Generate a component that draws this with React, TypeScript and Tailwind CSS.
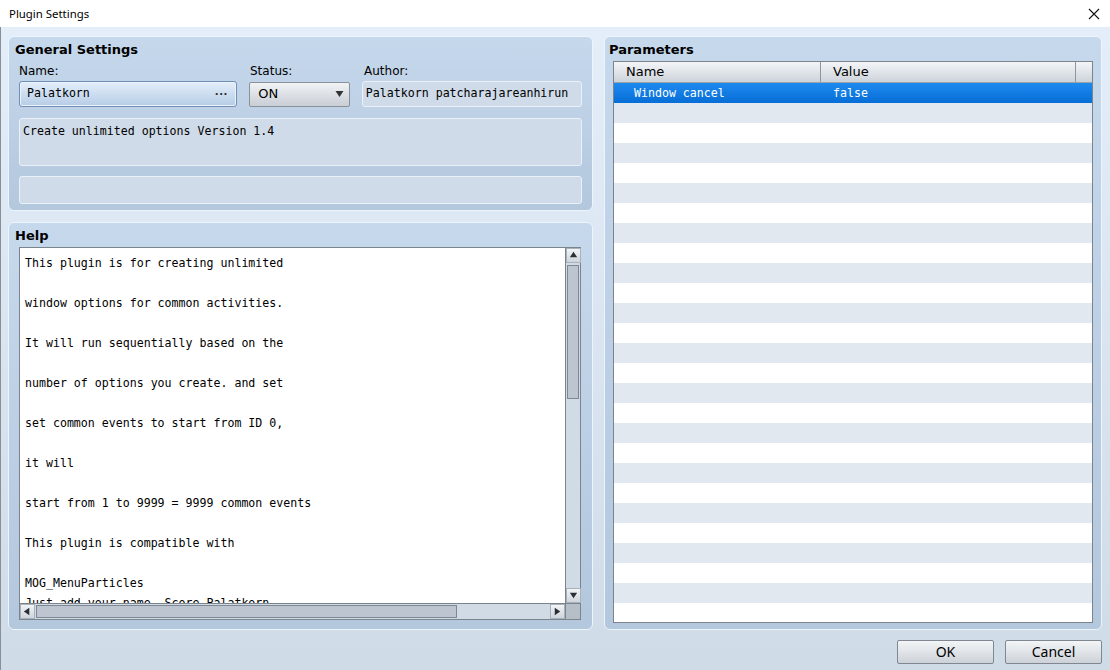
import React from "react";

const helpLines = [
  "This plugin is for creating unlimited",
  "",
  "window options for common activities.",
  "",
  "It will run sequentially based on the",
  "",
  "number of options you create. and set",
  "",
  "set common events to start from ID 0,",
  "",
  "it will",
  "",
  "start from 1 to 9999 = 9999 common events",
  "",
  "This plugin is compatible with",
  "",
  "MOG_MenuParticles",
  "Just add your name. Score Palatkorn",
];

const sans = "font-['DejaVu_Sans',sans-serif]";
const mono = "font-['DejaVu_Sans_Mono',monospace]";
const ui = "font-['Noto_Sans',sans-serif]";

function GroupBox({
  title,
  className,
  titleClass,
  children,
}: {
  title: string;
  className?: string;
  titleClass?: string;
  children: React.ReactNode;
}) {
  return (
    <div
      className={`flex flex-col rounded-[6px] border border-[#eef4fb] bg-gradient-to-b from-[#c6d8ec] to-[#b3c7dd] ${className ?? ""}`}
    >
      <div className={`${sans} h-[24px] pt-[5px] text-[13px] font-bold leading-[16px] text-black ${titleClass ?? "pl-[6px]"}`}>
        {title}
      </div>
      {children}
    </div>
  );
}

function Arrow({ dir }: { dir: "up" | "down" | "left" | "right" }) {
  const pts = {
    up: "2,8 6,2 10,8",
    down: "2,3 10,3 6,9",
    left: "8,2 8,10 2,6",
    right: "3,2 3,10 9,6",
  }[dir];
  return (
    <div className="flex h-[15px] w-[15px] items-center justify-center border border-[#a9b2bc] bg-gradient-to-b from-[#f2f4f6] to-[#cfd5dc]">
      <svg width="11" height="11" viewBox="0 0 12 12">
        <polygon points={pts} fill="#2a2f36" />
      </svg>
    </div>
  );
}

export default function App() {
  const rows = Array.from({ length: 27 });
  return (
    <div className="flex h-[670px] w-[1110px] flex-col overflow-hidden bg-white">
      {/* title bar */}
      <div className="flex h-[27px] shrink-0 items-center justify-between bg-white pl-[9px] pr-[8px]">
        <span className={`${ui} text-[11.4px] text-black`}>Plugin Settings</span>
        <svg width="12" height="12" viewBox="0 0 12 12" className="mr-[2px]">
          <path d="M1 1 L11 11 M11 1 L1 11" stroke="#111" strokeWidth="1.1" />
        </svg>
      </div>

      {/* body */}
      <div className="flex flex-1 flex-col border-l border-[#8a8f96] bg-gradient-to-b from-[#e3eefa] to-[#cfdbe7] pl-[7px] pr-[7px] pt-[9px]">
        <div className="flex h-[594px] gap-[11px]">
          {/* left column */}
          <div className="flex w-[585px] flex-col gap-[11px]">
            <GroupBox title="General Settings" className="h-[175px]">
              <div className="flex flex-col px-[10px]">
                <div className={`${sans} flex h-[20px] items-start pt-[3px] text-[12px] leading-[15px] text-black`}>
                  <span className="w-[231px]">Name:</span>
                  <span className="w-[114px]">Status:</span>
                  <span>Author:</span>
                </div>
                <div className="flex h-[26px] items-center">
                  <div className="flex h-[26px] w-[219px] items-center justify-between rounded-[3px] border border-[#6f8fb5] bg-gradient-to-b from-[#e3eefa] to-[#b6cde6] pl-[7px] pr-[8px] shadow-[inset_0_0_0_1px_#eaf2fb]">
                    <span className={`${mono} text-[11.6px] text-black`}>Palatkorn</span>
                    <span className="text-[12px] font-bold leading-none tracking-[1px] text-[#222]">···</span>
                  </div>
                  <div className="ml-[12px] flex h-[25px] w-[101px] items-center justify-between rounded-[2px] border border-[#8a9199] bg-gradient-to-b from-[#f1f3f5] to-[#c9ced5] pl-[8px] pr-[5px]">
                    <span className={`${sans} text-[13px] text-black`}>ON</span>
                    <svg width="9" height="8" viewBox="0 0 9 8">
                      <polygon points="0.5,1 8.5,1 4.5,7" fill="#333" />
                    </svg>
                  </div>
                  <div className="ml-[12px] flex h-[26px] w-[221px] items-center rounded-[3px] border border-[#eaf1f8] bg-[#cfdbe8] pl-[3px]">
                    <span className={`${mono} whitespace-nowrap text-[11.6px] text-black`}>
                      Palatkorn patcharajareanhirun
                    </span>
                  </div>
                </div>
                <div className={`${mono} mt-[11px] h-[48px] rounded-[3px] border border-[#eaf1f8] bg-[#cfdbe8] px-[3px] pt-[5px] text-[11.6px] leading-[14px] text-black`}>
                  Create unlimited options Version 1.4
                </div>
                <div className="mt-[10px] h-[28px] rounded-[3px] border border-[#eaf1f8] bg-[#cfdbe8]" />
              </div>
            </GroupBox>

            <GroupBox title="Help" className="flex-1">
              <div className="ml-[10px] mr-[11px] flex h-[373px] flex-col border border-[#7b838d] bg-white">
                <div className="flex min-h-0 flex-1">
                  <div className="flex-1 overflow-hidden pl-[5px] pt-[5px]">
                    {helpLines.map((l, i) => (
                      <div
                        key={i}
                        className={`${mono} h-[20px] whitespace-pre text-[11.6px] leading-[20px] text-black`}
                      >
                        {l}
                      </div>
                    ))}
                  </div>
                  {/* vertical scrollbar */}
                  <div className="flex w-[15px] flex-col border-l border-[#7b838d] bg-[#d0dbe6]">
                    <Arrow dir="up" />
                    <div className="mx-[1px] mt-[2px] h-[134px] border border-[#7d8893] bg-[#bcc5d0]" />
                    <div className="flex-1" />
                    <Arrow dir="down" />
                  </div>
                </div>
                {/* horizontal scrollbar */}
                <div className="flex h-[16px] border-t border-[#7b838d] bg-[#d0dbe6]">
                  <Arrow dir="left" />
                  <div className="my-[1px] ml-[1px] w-[421px] border border-[#7d8893] bg-[#bcc5d0]" />
                  <div className="flex-1" />
                  <Arrow dir="right" />
                  <div className="w-[15px] border-l border-[#7b838d] bg-[#b6bec8]" />
                </div>
              </div>
            </GroupBox>
          </div>

          {/* right column */}
          <GroupBox title="Parameters" className="w-[498px]" titleClass="pl-[4px]">
            <div className="ml-[8px] mr-[8px] flex h-[562px] flex-col overflow-hidden border border-[#7b838d] bg-white">
              <div className={`${sans} flex h-[21px] shrink-0 border-b border-[#9aa2ab] bg-gradient-to-b from-[#f4f6f8] to-[#cdd3da] text-[13px] leading-[20px] text-black`}>
                <div className="w-[207px] border-r border-[#8d959e] pl-[12px]">Name</div>
                <div className="w-[255px] border-r border-[#8d959e] pl-[12px]">Value</div>
                <div className="flex-1" />
              </div>
              <div className={`${mono} flex h-[20px] shrink-0 bg-gradient-to-b from-[#1d8af0] to-[#066ed6] text-[11.6px] leading-[21px] text-white`}>
                <div className="w-[207px] pl-[20px]">Window cancel</div>
                <div className="pl-[12px]">false</div>
              </div>
              {rows.map((_, i) => (
                <div
                  key={i}
                  className={`h-[20px] shrink-0 ${i % 2 === 0 ? "bg-[#e1e8f0]" : "bg-white"}`}
                />
              ))}
            </div>
          </GroupBox>
        </div>

        {/* buttons */}
        <div className="flex justify-end gap-[11px] pr-[1px] pt-[10px]">
          <button className={`${ui} h-[24px] w-[97px] rounded-[2px] border border-[#7f8791] bg-gradient-to-b from-[#f3f5f7] to-[#cdd2d8] text-[14px] leading-none text-black`}>
            OK
          </button>
          <button className={`${ui} h-[24px] w-[97px] rounded-[2px] border border-[#7f8791] bg-gradient-to-b from-[#f3f5f7] to-[#cdd2d8] text-[14px] leading-none text-black`}>
            Cancel
          </button>
        </div>
      </div>
    </div>
  );
}
